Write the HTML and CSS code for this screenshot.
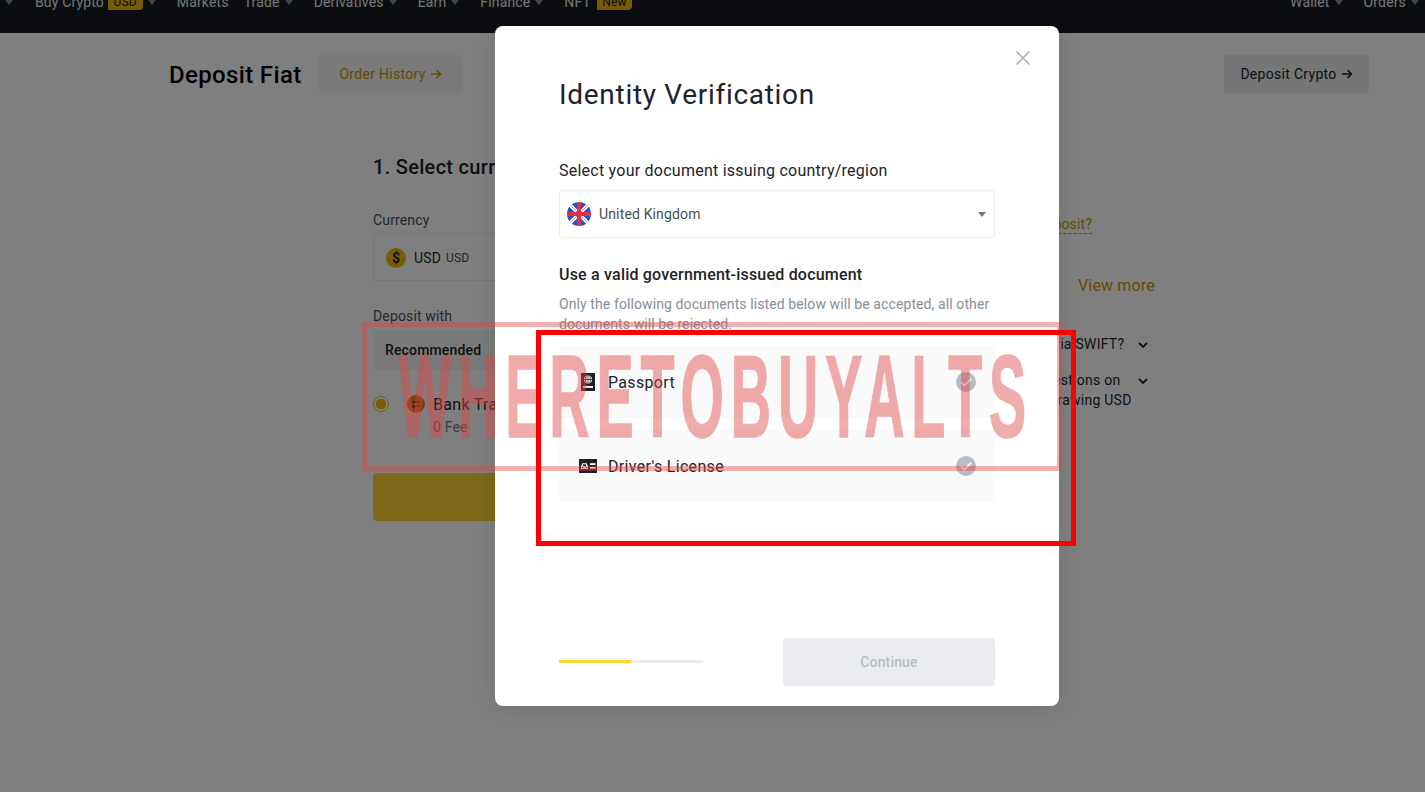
FILE: index.html
```html
<!DOCTYPE html>
<html lang="en">
<head>
<meta charset="utf-8">
<title>Deposit Fiat</title>
<link rel="stylesheet" href="styles.css">
</head>
<body>
<header class="nav">
  <div class="nav-inner">
    <div class="nav-left">
      <span class="caret first"></span>
      <span class="nav-item">Buy Crypto <b class="badge">USD</b><span class="caret"></span></span>
      <span class="nav-item plain">Markets</span>
      <span class="nav-item">Trade<span class="caret"></span></span>
      <span class="nav-item">Derivatives<span class="caret"></span></span>
      <span class="nav-item">Earn<span class="caret"></span></span>
      <span class="nav-item">Finance<span class="caret"></span></span>
      <span class="nav-item">NFT <b class="badge new">New</b></span>
    </div>
    <div class="nav-right">
      <span class="nav-item">Wallet<span class="caret"></span></span>
      <span class="nav-item">Orders<span class="caret"></span></span>
    </div>
  </div>
</header>

<section class="page-head">
  <h1 class="page-title">Deposit Fiat</h1>
  <a class="btn-soft gold">Order History <svg class="arrow" viewBox="0 0 12 12"><path d="M1 6h9.500M6.500 2l4 4-4 4" fill="none" stroke="currentColor" stroke-width="1.500"/></svg></a>
  <a class="btn-soft dark push">Deposit Crypto <svg class="arrow" viewBox="0 0 12 12"><path d="M1 6h9.500M6.500 2l4 4-4 4" fill="none" stroke="currentColor" stroke-width="1.500"/></svg></a>
</section>

<main class="content">
  <div class="form-col">
    <h2 class="step">1. Select currency</h2>
    <div class="field-label">Currency</div>
    <div class="currency-box">
      <span class="coin">$</span><span class="cur-main">USD</span><span class="cur-sub">USD</span>
    </div>
    <div class="field-label second">Deposit with</div>
    <div class="tab-bar">Recommended</div>
    <div class="method">
      <span class="radio"></span>
      <svg class="bank-icon" viewBox="0 0 18 18">
        <circle cx="9" cy="9" r="9" fill="#f38020"/>
        <path d="M5 7h8M10.500 4.800L13 7M13 11H5M7.500 13.200L5 11" fill="none" stroke="#7a3d00" stroke-width="1.300"/>
      </svg>
      <div>
        <div class="method-name">Bank Transfer</div>
        <div class="method-fee">0 Fee</div>
      </div>
    </div>
    <div class="primary-btn"></div>
  </div>
  <aside class="side-col">
    <a class="how-link">How to deposit?</a>
    <a class="view-more">View more</a>
    <div class="faq"><span>Deposit via SWIFT?</span><svg class="chev" viewBox="0 0 10 6"><path d="M1 1l4 4 4-4" fill="none" stroke="#1e2329" stroke-width="1.8"/></svg></div>
    <div class="faq two"><span>More questions on<br>for withdrawing USD</span><svg class="chev" viewBox="0 0 10 6"><path d="M1 1l4 4 4-4" fill="none" stroke="#1e2329" stroke-width="1.8"/></svg></div>
  </aside>
</main>

<div class="overlay">
  <div class="modal">
    <svg class="close" viewBox="0 0 16 16"><path d="M1.5 1.5l13 13M14.500 1.500l-13 13" stroke="#aeb4bc" stroke-width="1.600" fill="none"/></svg>
    <h2 class="modal-title">Identity Verification</h2>
    <div class="modal-label">Select your document issuing country/region</div>
    <div class="select">
      <svg class="flag" viewBox="0 0 24 24">
        <defs><clipPath id="round"><circle cx="12" cy="12" r="12"/></clipPath></defs>
        <g clip-path="url(#round)">
          <rect width="24" height="24" fill="#fff"/>
          <path d="M2.500 0L10 7.500V0zM21.500 0L14 7.500V0zM2.500 24L10 16.500V24zM21.500 24L14 16.500V24zM0 2.500L7.500 10H0zM24 2.500L16.500 10H24zM0 21.500L7.500 14H0zM24 21.500L16.500 14H24z" fill="#2455c3"/>
          <path d="M2 2l8 8M22 2l-8 8M2 22l8-8M22 22l-8-8" stroke="#e0304a" stroke-width=".6"/>
          <rect x="10" width="4" height="24" fill="#e0304a"/>
          <rect y="10" width="24" height="4" fill="#e0304a"/>
        </g>
      </svg>
      <span class="select-text">United Kingdom</span>
      <span class="select-caret"></span>
    </div>
    <div class="doc-title">Use a valid government-issued document</div>
    <p class="doc-note">Only the following documents listed below will be accepted, all other documents will be rejected.</p>
    <div class="doc-card">
      <span class="doc-icon">
        <svg class="passport" viewBox="0 0 14 18">
          <rect width="14" height="18" fill="#1e2026"/>
          <circle cx="7" cy="6.500" r="4" fill="#fff"/>
          <path d="M3 6.500h8M7 2.500v8M5.200 3c-1 2.300-1 4.700 0 7M8.800 3c1 2.300 1 4.700 0 7" stroke="#1e2026" stroke-width=".8" fill="none"/>
          <rect x="2" y="13" width="10" height="1.800" fill="#fff"/>
        </svg>
      </span>
      <span class="doc-name">Passport</span>
      <svg class="check" viewBox="0 0 20 20"><circle cx="10" cy="10" r="10" fill="#b7bdc6"/><path d="M5 10.300l3.500 3.300L15 6.800" stroke="#fff" stroke-width="1.800" fill="none"/></svg>
    </div>
    <div class="doc-card">
      <span class="doc-icon">
        <svg class="license" viewBox="0 0 18 14">
          <rect width="18" height="14" fill="#1e2026"/>
          <path d="M2 10V7.500L3.300 4.300h4.400L9 7.500V10z" fill="#fff"/>
          <rect x="4" y="5.300" width="3" height="1.800" fill="#1e2026"/>
          <rect x="3" y="8" width="1.300" height="1" fill="#1e2026"/>
          <rect x="6.700" y="8" width="1.300" height="1" fill="#1e2026"/>
          <rect x="11" y="4.200" width="5.500" height="1.800" fill="#fff"/>
          <rect x="11" y="8" width="5.500" height="1.800" fill="#fff"/>
        </svg>
      </span>
      <span class="doc-name">Driver's License</span>
      <svg class="check" viewBox="0 0 20 20"><circle cx="10" cy="10" r="10" fill="#b7bdc6"/><path d="M5 10.300l3.500 3.300L15 6.800" stroke="#fff" stroke-width="1.800" fill="none"/></svg>
    </div>
    <div class="modal-foot">
      <div class="progress"><div class="progress-fill"></div></div>
      <div class="continue">Continue</div>
    </div>
  </div>
</div>

<div class="watermark"><span class="wm-text">WHERETOBUYALTS</span></div>
<div class="redbox"></div>
</body>
</html>
```
FILE: styles.css
```css
* { box-sizing: border-box; }
html, body { margin: 0; height: 100%; overflow: hidden; }
body {
  position: relative;
  background: #fff;
  color: #1e2329;
  font-family: Roboto, "Noto Sans", sans-serif;
  font-size: 14px;
  letter-spacing: .15px;
}
h1, h2, p { margin: 0; font-weight: 400; }

.nav { height: 33px; background: #181a20; overflow: hidden; color: #eaecef; }
.nav-inner {
  display: flex;
  justify-content: space-between;
  margin-top: -10px;
  height: 24px;
  align-items: center;
  padding: 0 6px 0 5px;
}
.nav-left, .nav-right { display: flex; align-items: center; gap: 21px; }
.nav-left .first { margin: 0 1px 0 0; }
.nav-item { display: flex; align-items: center; white-space: pre; font-size: 14px; }
.nav-item.plain { margin-right: -6px; }
.caret {
  display: inline-block;
  width: 0; height: 0;
  margin-left: 5px;
  border: 4px solid transparent;
  border-top: 5px solid #848e9c;
  border-bottom: 0;
}
.badge {
  font-weight: 400;
  font-size: 12px;
  line-height: 16px;
  padding: 0 6px;
  color: #181a20;
  background: #f0b90b;
  border-radius: 4px 4px 4px 0;
}
.badge.new { padding: 0 5px; margin-left: 3px; }

.page-head {
  display: flex;
  align-items: center;
  height: 81px;
  padding: 1px 56px 0 169px;
}
.page-title { font-size: 24px; font-weight: 500; line-height: 32px; width: 149px; padding-top: 2px; white-space: nowrap; color: #000; letter-spacing: .35px; }
.btn-soft {
  display: flex; align-items: center; justify-content: center; gap: 4px;
  width: 145px; height: 38px;
  border-radius: 4px;
  font-size: 14px; font-weight: 400; letter-spacing: .3px;
}
.btn-soft.gold { background: #f5f5f5; color: #c99400; }
.btn-soft.dark { background: #eaecef; color: #1e2329; }
.push { margin-left: auto; }
.arrow { width: 12px; height: 12px; }

.content { display: flex; padding-left: 373px; }
.form-col { width: 400px; padding-top: 39px; }
.step { font-size: 20px; line-height: 28px; font-weight: 500; letter-spacing: .3px; }
.field-label { color: #474d57; line-height: 20px; margin-top: 29px; }
.field-label.second { margin-top: 25px; }
.currency-box {
  display: flex; align-items: center;
  height: 48px; margin-top: 3px; padding: 1px 0 0 12px;
  border: 1px solid #eaecef; border-radius: 4px;
}
.coin {
  width: 20px; height: 20px; border-radius: 50%;
  background: #f0b90b; color: #1e2329;
  display: flex; align-items: center; justify-content: center;
  font-size: 14px; font-weight: 700;
  margin-right: 8px;
}
.cur-main { font-size: 14px; margin-right: 5px; }
.cur-sub { font-size: 12px; color: #474d57; }
.tab-bar {
  display: flex; align-items: center;
  height: 40px; padding-left: 12px; margin-top: 4px;
  background: #f5f5f5; border-radius: 4px; font-weight: 500;
}
.method { display: flex; align-items: flex-start; margin-top: 24px; height: 79px; }
.radio {
  width: 16px; height: 16px; margin: 2px 18px 0 0;
  border: 1px solid #f0b90b; border-radius: 50%;
  background: radial-gradient(circle, #f0b90b 0 5px, transparent 5.500px);
}
.bank-icon { width: 18px; height: 18px; margin: 1px 8px 0 0; flex: none; }
.method-name { font-size: 16px; line-height: 20px; letter-spacing: .3px; padding-top: 1px; }
.method-fee { font-size: 14px; line-height: 20px; margin-top: 2px; color: #707a8a; }
.primary-btn { height: 48px; background: #fcd535; border-radius: 4px; }

.side-col { position: relative; width: 400px; padding: 101px 0 0 227px; }
.how-link {
  display: block; width: 110px; margin-left: -18px;
  white-space: nowrap; color: #c99400; border-bottom: 1px dashed #c99400;
  line-height: 18px; text-align: right;
}
.view-more { display: block; margin: 40px 0 0 78px; font-size: 16px; line-height: 24px; color: #c99400; }
.faq { display: flex; margin-top: 36px; line-height: 20px; width: 148px; justify-content: space-between; white-space: nowrap; letter-spacing: .25px; }
.faq.two { margin-top: 16px; }
.chev { width: 10px; height: 6px; margin-top: 8px; }

.overlay {
  position: absolute; inset: 0;
  background: rgba(0, 0, 0, .5);
  display: flex; justify-content: flex-start; align-items: flex-start;
  padding: 26px 0 0 495px;
}
.modal {
  position: relative;
  width: 564px; height: 680px;
  padding: 49px 64px 20px;
  background: #fff; border-radius: 8px;
  display: flex; flex-direction: column;
  box-shadow: 0 0 20px rgba(0, 0, 0, .12);
}
.close { position: absolute; top: 24px; right: 28px; width: 16px; height: 16px; }
.modal-title { font-size: 28px; line-height: 40px; color: #1e2329; letter-spacing: .7px; }
.modal-label { font-size: 16px; line-height: 24px; margin-top: 44px; letter-spacing: .24px; }
.select {
  display: flex; align-items: center;
  height: 48px; margin-top: 7px; padding: 0 8px 0 7px;
  border: 1px solid #eaecef; border-radius: 4px;
}
.flag { width: 24px; height: 24px; margin-right: 8px; }
.select-text { color: #474d57; flex: 1; }
.select-caret {
  width: 0; height: 0;
  border: 4px solid transparent; border-top: 5px solid #707a8a; border-bottom: 0;
}
.doc-title { font-size: 16px; line-height: 24px; font-weight: 500; margin-top: 25px; letter-spacing: .2px; }
.doc-note { line-height: 20px; margin-top: 7px; color: #848e9c; height: 40px; letter-spacing: .1px; }
.doc-card {
  display: flex; align-items: center;
  height: 72px; margin-top: 12px;
  padding: 0 19px 0 20px;
  background: #fafafa; border-radius: 4px;
}
.doc-icon { width: 29px; display: flex; justify-content: center; padding-right: 11px; }
.passport { width: 14px; height: 18px; flex: none; }
.license { width: 18px; height: 14px; flex: none; }
.doc-name { font-size: 16px; flex: 1; color: #1e2329; letter-spacing: .32px; }
.check { width: 20px; height: 20px; }
.modal-foot { display: flex; align-items: center; justify-content: space-between; margin-top: auto; }
.progress { width: 144px; height: 3px; background: #eaecef; margin-top: -2px; }
.progress-fill { width: 50%; height: 100%; background: #fcd535; }
.continue {
  width: 212px; height: 48px;
  display: flex; align-items: center; justify-content: center;
  background: #eaecef; color: #b7bdc6;
  border-radius: 4px; font-weight: 500;
}

.watermark {
  position: absolute; left: 362px; top: 322px;
  width: 700px; height: 149px;
  border: 5px solid rgba(224, 70, 70, .42);
  overflow: hidden;
  display: flex; align-items: center; justify-content: center;
}
.wm-text {
  flex: none;
  font-family: "Liberation Sans", sans-serif;
  font-weight: 700; font-size: 116px; line-height: 1;
  letter-spacing: 14.5px;
  text-indent: 14.5px;
  color: #e04646;
  -webkit-text-stroke: 1.5px #e04646;
  opacity: .45;
  white-space: nowrap;
  transform: scaleX(.48);
}
.redbox {
  position: absolute; left: 536px; top: 330px;
  width: 540px; height: 216px;
  border: 5px solid #f00;
}
```
